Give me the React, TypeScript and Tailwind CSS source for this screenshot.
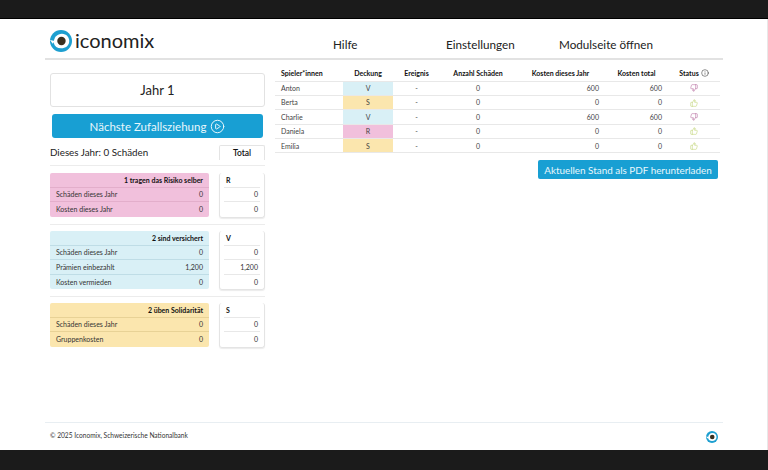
import { JSX } from "react";
import { Info, PlayCircle, ThumbsDown, ThumbsUp } from "lucide-react";

interface SpielerRow {
  name: string;
  deckung: string;
  kostenJahr: string;
  kostenTotal: string;
  ok: boolean;
}

const spieler: SpielerRow[] = [
  { name: "Anton", deckung: "V", kostenJahr: "600", kostenTotal: "600", ok: false },
  { name: "Berta", deckung: "S", kostenJahr: "0", kostenTotal: "0", ok: true },
  { name: "Charlie", deckung: "V", kostenJahr: "600", kostenTotal: "600", ok: false },
  { name: "Daniela", deckung: "R", kostenJahr: "0", kostenTotal: "0", ok: true },
  { name: "Emilia", deckung: "S", kostenJahr: "0", kostenTotal: "0", ok: true },
];

const deckungBg: Record<string, string> = {
  V: "bg-[#d9f0f6]",
  S: "bg-[#fbe6ae]",
  R: "bg-[#f1c0dc]",
};

function Logo({ size }: { size: number }): JSX.Element {
  return (
    <svg width={size} height={size} viewBox="0 0 24 24" className="shrink-0">
      <circle cx="12" cy="12" r="12" fill="#1d9fd0" />
      <path d="M4 14 C4 8 8 4 13 4 C18 4 21 8 21 12 C21 17 17 20 12 20 C8 20 5 18 4 14 Z" fill="#fff" />
      <path d="M0 11 L5 12 L3 15 Z" fill="#fff" />
      <circle cx="12.5" cy="12" r="4.6" fill="#3a3020" />
    </svg>
  );
}

interface GruppeProps {
  titel: string;
  kuerzel: string;
  bg: string;
  line: string;
  rows: { label: string; wert: string; total: string }[];
}

function Gruppe({ titel, kuerzel, bg, line, rows }: GruppeProps): JSX.Element {
  return (
    <div className="flex justify-between items-start">
      <div className={`w-[159px] rounded-[2px] ${bg} text-[7px] text-[#333]`}>
        <div className={`h-[15px] flex items-center justify-end pr-[6px] font-bold text-[#111] border-b ${line}`}>
          {titel}
        </div>
        {rows.map((r, i) => (
          <div
            key={r.label}
            className={`h-[14.4px] flex items-center justify-between px-[6px] ${i < rows.length - 1 ? `border-b ${line}` : ""}`}
          >
            <span>{r.label}</span>
            <span>{r.wert}</span>
          </div>
        ))}
      </div>
      <div className="w-[46px] rounded-[3px] border-x border-b border-[#e4e4e4] shadow-[0_1px_1px_rgba(0,0,0,0.08)] text-[7px] text-[#333] px-[4px]">
        <div className="h-[15px] flex items-center pl-[2px] font-bold text-[#111] border-b border-[#e8e8e8]">
          {kuerzel}
        </div>
        {rows.map((r, i) => (
          <div
            key={r.label}
            className={`h-[14.4px] flex items-center justify-end pr-[2px] ${i < rows.length - 1 ? "border-b border-[#e8e8e8]" : ""}`}
          >
            {r.total}
          </div>
        ))}
      </div>
    </div>
  );
}

function App(): JSX.Element {
  return (
    <div className="w-[768px] h-[470px] overflow-hidden bg-[#1b1b1b] flex flex-col font-['Lato','Noto_Sans',sans-serif]">
      <div className="h-[19px] shrink-0 border-b border-black" />
      <div className="h-[431px] shrink-0 bg-white flex flex-col px-[45px] border-r border-[#e8e8e8]">
        <header className="h-[41px] shrink-0 flex items-center border-b-2 border-[#e2e2e2] w-[678px]">
          <div className="flex items-center gap-[3px] pl-[5px] w-[280px] pt-[4px]">
            <Logo size={22} />
            <span className="text-[20px] leading-none text-[#222] font-normal -mt-[2px]">iconomix</span>
          </div>
          <nav className="flex text-[11.7px] text-[#222] pt-[12px]">
            <span className="ml-[8px] w-[113px]">Hilfe</span>
            <span className="w-[113px]">Einstellungen</span>
            <span>Modulseite öffnen</span>
          </nav>
        </header>

        <main className="flex-1 flex pt-[13px] pl-[5px] w-[678px]">
          <div className="w-[215px] shrink-0 flex flex-col">
            <div className="h-[34px] rounded-[3px] border border-[#e2e2e2] flex items-center justify-center text-[13px] text-[#222] pt-[2px]">
              Jahr 1
            </div>
            <button className="mt-[7px] mx-[2px] h-[24px] rounded-[3px] bg-[#189fd3] text-[#e8f7fc] text-[11.5px] flex items-center justify-center gap-[4px] pt-[1px]">
              Nächste Zufallsziehung
              <PlayCircle size={15} strokeWidth={1.6} />
            </button>
            <div className="mt-[7px] h-[21px] flex justify-between items-start border-b border-[#ececec]">
              <span className="text-[9.8px] text-[#222] leading-none pt-[3px]">Dieses Jahr: 0 Schäden</span>
              <span className="w-[46px] h-[15px] border-x border-t border-[#e4e4e4] rounded-t-[2px] text-[8.5px] font-semibold text-[#111] flex items-center justify-center">
                Total
              </span>
            </div>
            <div className="mt-[7px] flex flex-col">
              <Gruppe
                titel="1 tragen das Risiko selber"
                kuerzel="R"
                bg="bg-[#f1c0dc]"
                line="border-[#e3aecb]"
                rows={[
                  { label: "Schäden dieses Jahr", wert: "0", total: "0" },
                  { label: "Kosten dieses Jahr", wert: "0", total: "0" },
                ]}
              />
              <hr className="mt-[6px] mb-[6px] border-[#ececec]" />
              <Gruppe
                titel="2 sind versichert"
                kuerzel="V"
                bg="bg-[#d9f0f6]"
                line="border-[#bfdde6]"
                rows={[
                  { label: "Schäden dieses Jahr", wert: "0", total: "0" },
                  { label: "Prämien einbezahlt", wert: "1,200", total: "1,200" },
                  { label: "Kosten vermieden", wert: "0", total: "0" },
                ]}
              />
              <hr className="mt-[6px] mb-[6px] border-[#ececec]" />
              <Gruppe
                titel="2 üben Solidarität"
                kuerzel="S"
                bg="bg-[#fbe6ae]"
                line="border-[#e8d296]"
                rows={[
                  { label: "Schäden dieses Jahr", wert: "0", total: "0" },
                  { label: "Gruppenkosten", wert: "0", total: "0" },
                ]}
              />
            </div>
          </div>

          <div className="ml-[10px] w-[445px] flex flex-col -mt-[7px]">
            <table className="w-full table-fixed border-collapse text-[7px] text-[#444]">
              <colgroup>
                <col className="w-[68px]" />
                <col className="w-[50px]" />
                <col className="w-[47px]" />
                <col className="w-[76px]" />
                <col className="w-[89px]" />
                <col className="w-[63px]" />
                <col className="w-[52px]" />
              </colgroup>
              <thead>
                <tr className="h-[15px] border-b border-[#e8e8e8] text-[#111] font-bold">
                  <th className="text-left pl-[6px]">Spieler*innen</th>
                  <th>Deckung</th>
                  <th>Ereignis</th>
                  <th>Anzahl Schäden</th>
                  <th>Kosten dieses Jahr</th>
                  <th>Kosten total</th>
                  <th>
                    <span className="inline-flex items-center gap-[2px]">
                      Status
                      <Info size={8} strokeWidth={1.4} />
                    </span>
                  </th>
                </tr>
              </thead>
              <tbody>
                {spieler.map((s) => (
                  <tr key={s.name} className="h-[14.4px] border-b border-[#e8e8e8]">
                    <td className="pl-[6px]">{s.name}</td>
                    <td className={`text-center ${deckungBg[s.deckung]}`}>{s.deckung}</td>
                    <td className="text-center">-</td>
                    <td className="text-center">0</td>
                    <td className="text-right pr-[6px]">{s.kostenJahr}</td>
                    <td className="text-right pr-[6px]">{s.kostenTotal}</td>
                    <td>
                      <div className="flex justify-center">
                        {s.ok ? (
                          <ThumbsUp size={8} strokeWidth={1.4} className="text-[#b5cb5a]" />
                        ) : (
                          <ThumbsDown size={8} strokeWidth={1.4} className="text-[#a8508c]" />
                        )}
                      </div>
                    </td>
                  </tr>
                ))}
              </tbody>
            </table>
            <div className="mt-[7px] flex justify-end pr-[2px]">
              <button className="w-[180px] h-[19px] rounded-[2px] bg-[#189fd3] text-[#e8f7fc] text-[9.9px]">
                Aktuellen Stand als PDF herunterladen
              </button>
            </div>
          </div>
        </main>

        <footer className="h-[28px] shrink-0 border-t border-[#e8eef2] w-[678px] flex items-center justify-between pl-[5px] pr-[5px]">
          <span className="text-[6.6px] text-[#333] pb-[2px]">© 2025 Iconomix, Schweizerische Nationalbank</span>
          <Logo size={12} />
        </footer>
      </div>
    </div>
  );
}

export default App;
